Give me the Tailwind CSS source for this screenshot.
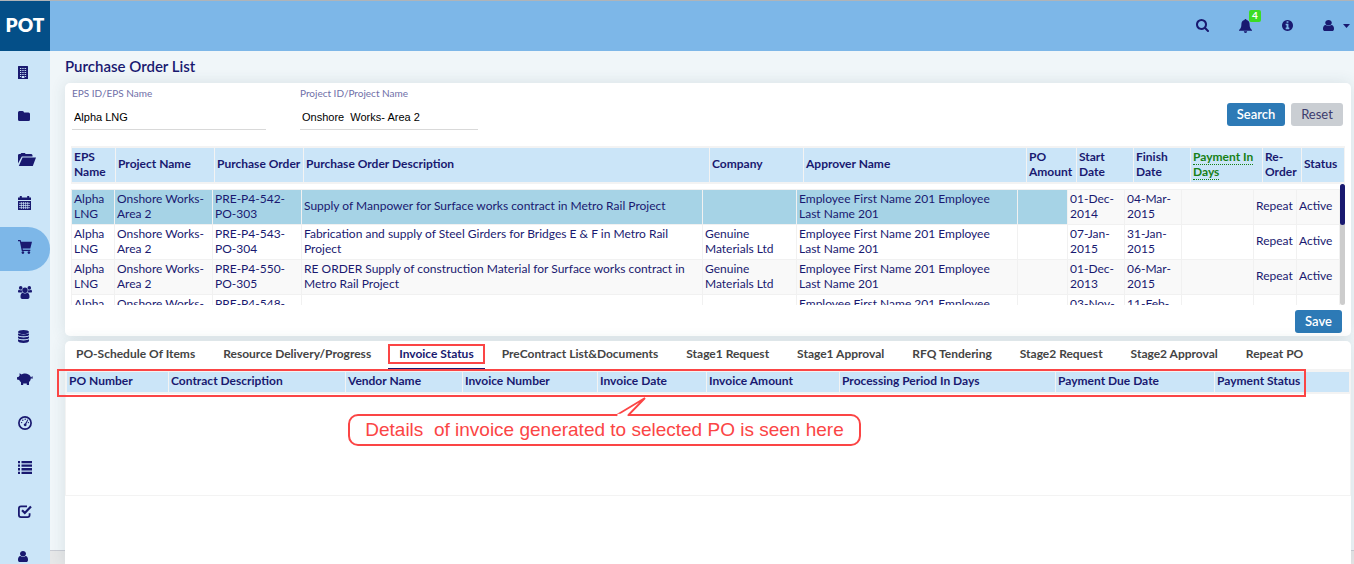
<!DOCTYPE html>
<html lang="en">
<head>
<meta charset="utf-8">
<title>Purchase Order List</title>
<script src="https://cdn.jsdelivr.net/npm/@tailwindcss/browser@4"></script>
</head>
<body class="flex h-screen flex-col overflow-hidden border-t border-[#b0b4b8] bg-[#f0f6f9] font-['Lato',sans-serif] text-xs text-[#191970]">

<header class="flex h-[50px] shrink-0 items-center bg-[#7db7e8]">
  <a href="#" class="flex h-full w-[50px] items-center justify-center bg-[#044f88] pb-[2px] text-[19px] font-extrabold text-white">POT</a>
  <div class="ml-auto flex items-center pr-1 pb-px">
    <button aria-label="Search" class="mr-[30px] block"><svg class="size-[13px]" viewBox="64 128 1664 1664" fill="currentColor"><path d="M1216 832q0-185-131.500-316.500t-316.500-131.500-316.500 131.500-131.500 316.500 131.500 316.500 316.500 131.500 316.500-131.500 131.500-316.500zm512 832q0 52-38 90t-90 38q-54 0-90-38l-343-342q-179 124-399 124-143 0-273.500-55.500t-225-150-150-225-55.500-273.500 55.500-273.500 150-225 225-150 273.500-55.500 273.500 55.500 225 150 150 225 55.500 273.500q0 220-124 399l343 343q37 37 37 90z"/></svg></button>
    <button aria-label="Notifications" class="relative mr-[30px] block"><svg class="h-[14px] w-[13px]" viewBox="0 0 13 14" fill="currentColor"><path d="M6.500 0a1 1 0 0 1 1 1.100C9.700 1.600 10.600 3.400 10.600 5.300c0 3 .8 4.500 2.400 5.700v.8H0V11c1.600-1.200 2.400-2.700 2.400-5.700 0-1.900.9-3.700 3.100-4.200A1 1 0 0 1 6.500 0zM4.800 12.300h3.400a1.700 1.700 0 0 1-3.400 0z"/></svg><span class="absolute -top-[9px] left-[10px] flex h-3 w-3 items-center justify-center rounded-xs bg-[#3cdc23] text-[10px] font-bold text-white">4</span></button>
    <button aria-label="Information" class="mr-[30px] block"><svg class="size-[11px]" viewBox="128 128 1536 1536" fill="currentColor"><path d="M1152 1376v-160q0-14-9-23t-23-9h-96v-512q0-14-9-23t-23-9h-320q-14 0-23 9t-9 23v160q0 14 9 23t23 9h96v320h-96q-14 0-23 9t-9 23v160q0 14 9 23t23 9h448q14 0 23-9t9-23zm-128-896v-160q0-14-9-23t-23-9h-192q-14 0-23 9t-9 23v160q0 14 9 23t23 9h192q14 0 23-9t9-23zm640 416q0 209-103 385.500t-279.500 279.500-385.500 103-385.500-103-279.500-279.500-103-385.500 103-385.500 279.500-279.500 385.500-103 385.500 103 279.500 279.500 103 385.500z"/></svg></button>
    <button aria-label="Account" class="flex items-center gap-[9px]"><svg class="h-[11px] w-[11px]" viewBox="256 128 1280 1536" preserveAspectRatio="none" fill="currentColor"><path d="M1536 1399q0 109-62.500 187t-150.500 78h-854q-88 0-150.500-78t-62.500-187q0-85 8.500-160.500t31.500-152 58.500-131 94-89 134.500-34.500q131 128 313 128t313-128q76 0 134.500 34.500t94 89 58.500 131 31.500 152 8.500 160.500zm-256-887q0 159-112.500 271.500t-271.500 112.500-271.500-112.500-112.500-271.500 112.500-271.500 271.500-112.500 271.500 112.500 112.500 271.500z"/></svg><svg class="h-1 w-[7px]" viewBox="0 0 7 4" fill="currentColor"><path d="M0 0h7L3.500 4z"/></svg></button>
  </div>
</header>

<div class="flex min-h-0 flex-1">
  <nav aria-label="Main" class="w-[50px] shrink-0 overflow-hidden bg-[#cbe5f8]">
    <a href="#" aria-label="Companies" class="flex h-11 items-center pb-[2px] pl-[18px]"><svg class="h-[13px] w-[10px]" viewBox="0 0 10 13"><path fill="currentColor" d="M.5 0h9a.5.5 0 0 1 .5.500V13H0V.500A.5.500 0 0 1 .5 0z"/><path fill="#cbe5f8" d="M2 2h1v1H2zm1.700 0h1v1h-1zm1.700 0h1v1h-1zM7.100 2h1v1h-1zM2 4h1v1H2zm1.700 0h1v1h-1zm1.700 0h1v1h-1zm1.700 0h1v1h-1zM2 6h1v1H2zm1.700 0h1v1h-1zm1.700 0h1v1h-1zm1.700 0h1v1h-1zM2 8h1v1H2zm1.700 0h1v1h-1zm1.700 0h1v1h-1zm1.700 0h1v1h-1zM2 10h1v1H2zm5.100 0h1v1h-1zM3.700 10h2.700v2H3.700z"/></svg></a>
    <a href="#" aria-label="Folder" class="flex h-11 items-center pb-[2px] pl-[18px]"><svg class="h-[10px] w-3" viewBox="0 0 12 10" fill="currentColor"><path d="M1.500 0h3A1.500 1.500 0 0 1 6 1.500h4.500A1.500 1.500 0 0 1 12 3v5.500a1.500 1.500 0 0 1-1.500 1.500h-9A1.500 1.500 0 0 1 0 8.500v-7A1.500 1.500 0 0 1 1.500 0z"/></svg></a>
    <a href="#" aria-label="Open folder" class="flex h-11 items-center pb-1 pl-[18px]"><svg class="h-[13px] w-[18px]" viewBox="0 0 18 13" fill="currentColor"><path d="M0 10.500V1.800L1 1h1.500L3.300 0h3.500l.9 1H13.500l1 1v1.500H3.800z"/><path d="M4.500 4.400H18L14.800 13H.8z"/></svg></a>
    <a href="#" aria-label="Calendar" class="flex h-11 items-center pb-1 pl-[18px]"><svg class="h-[14px] w-[13px]" viewBox="0 0 13 14"><path fill="currentColor" d="M0 1.500h1.800V0h2v1.500h5.400V0h2v1.500H13V4H0zM0 5h13v8.500a.5.5 0 0 1-.5.500H.5a.5.5 0 0 1-.5-.5z"/><path stroke="#cbe5f8" stroke-width=".7" d="M1 7.300h11M1 9.500h11M1 11.700h11M3.400 6v7M5.500 6v7M7.600 6v7M9.700 6v7"/></svg></a>
    <a href="#" aria-label="Purchase orders" aria-current="page" class="flex h-11 items-center rounded-r-full bg-[#7db7e8] pb-1 pl-[18px]"><svg class="size-[14px]" viewBox="0 0 14 14" fill="currentColor"><path d="M0 0h2.600l.6 1.800H14L12.300 8.500H4.600l.3 1.300h7.400v1.200H3.800L1.800 1.300H0z"/><circle cx="4.900" cy="12.600" r="1.300"/><circle cx="10.900" cy="12.600" r="1.300"/></svg></a>
    <a href="#" aria-label="Teams" class="flex h-11 items-center pb-[2px] pl-[18px]"><svg class="h-[13px] w-[14px]" viewBox="0 0 14 13" fill="currentColor"><circle cx="2.700" cy="1.900" r="1.800"/><circle cx="11.300" cy="1.900" r="1.800"/><circle cx="7" cy="4.300" r="2.700"/><path d="M0 5.500C0 4.300.5 3.700 1.200 3.700c.8.600 1.700.6 2.500.3 0 1 .3 1.900.9 2.600H1C.3 6.600 0 6.200 0 5.500zM14 5.500c0-1.200-.5-1.800-1.200-1.800-.8.600-1.700.6-2.500.3 0 1-.3 1.900-.9 2.600H13c.7 0 1-.4 1-1.100zM2.500 11c0-2.500.6-4 2.200-4.200 1.400 1 3.200 1 4.600 0 1.600.2 2.200 1.700 2.200 4.200 0 1.300-.7 2-1.800 2H4.300c-1.100 0-1.800-.7-1.800-2z"/></svg></a>
    <a href="#" aria-label="Data" class="flex h-11 items-center pb-[2px] pl-[18px]"><svg class="h-[13px] w-[11px]" viewBox="0 0 11 13" fill="currentColor"><ellipse cx="5.500" cy="2" rx="5.500" ry="2"/><path d="M0 3.300c1.600 1.500 9.400 1.500 11 0v1.400c0 2.200-11 2.200-11 0zM0 6.300c1.600 1.500 9.400 1.500 11 0v1.400c0 2.200-11 2.200-11 0zM0 9.300c1.600 1.500 9.400 1.500 11 0V11c0 2.600-11 2.600-11 0z"/></svg></a>
    <a href="#" aria-label="Budget" class="flex h-11 items-center pb-1 pl-[17px]"><svg class="h-3 w-4" viewBox="0 0 16 12" fill="currentColor"><path d="M2.500.3 4.800 1.500C6 .3 9.500.2 11.500 1.400c1.300.7 2 1.700 2.300 2.900h.8l.3-1h.7l-.2 1.100.6.300-.2.800h-2c-.1 1.500-.7 2.600-1.800 3.500V12H9.800v-1.600H6.200V12H4V9.300C3.200 8.700 2.600 8 2.200 7.100L0 6.500V4.300l1.800-.5.8-1.300z"/></svg></a>
    <a href="#" aria-label="Dashboard" class="flex h-11 items-center pb-1 pl-[18px]"><svg class="size-[14px]" viewBox="0 0 14 14" fill="currentColor"><circle cx="7" cy="7" r="6.100" fill="none" stroke="currentColor" stroke-width="1.700"/><circle cx="3.600" cy="6.600" r=".7"/><circle cx="4.800" cy="4.200" r=".7"/><circle cx="7.200" cy="3.200" r=".7"/><circle cx="10.400" cy="6.600" r=".7"/><path d="m9.700 3.300.6.400-2 4.300a1.400 1.400 0 1 1-1.200-.6z"/></svg></a>
    <a href="#" aria-label="Lists" class="flex h-11 items-center pb-1 pl-[18px]"><svg class="h-[13px] w-[14px]" viewBox="0 0 14 13" fill="currentColor"><path d="M0 0h2v2.300H0zM3.500 0H14v2.300H3.500zM0 3.500h2v2.300H0zM3.500 3.500H14v2.300H3.500zM0 7.100h2v2.300H0zM3.500 7.100H14v2.300H3.500zM0 10.700h2V13H0zM3.500 10.700H14V13H3.500z"/></svg></a>
    <a href="#" aria-label="Approvals" class="flex h-11 items-center pb-1 pl-[18px]"><svg class="h-[13px] w-[14px]" viewBox="0 0 14 13" fill="none" stroke="currentColor"><path stroke-width="1.800" d="M9 1.300H3A2.100 2.100 0 0 0 .9 3.400V10A2.100 2.100 0 0 0 3 12.100h6.500A2.100 2.100 0 0 0 11.600 10V8.200"/><path stroke-width="2.200" d="m4 5.200 2.800 2.700L13 1.500"/></svg></a>
    <a href="#" aria-label="Users" class="flex h-11 items-center pb-[2px] pl-[18px]"><svg class="h-[11px] w-[10px]" viewBox="256 128 1280 1536" preserveAspectRatio="none" fill="currentColor"><path d="M1536 1399q0 109-62.500 187t-150.500 78h-854q-88 0-150.500-78t-62.500-187q0-85 8.500-160.500t31.500-152 58.500-131 94-89 134.500-34.500q131 128 313 128t313-128q76 0 134.500 34.500t94 89 58.500 131 31.500 152 8.500 160.500zm-256-887q0 159-112.500 271.500t-271.500 112.500-271.500-112.500-112.500-271.500 112.500-271.500 271.500-112.500 271.500 112.500 112.500 271.500z"/></svg></a>
  </nav>

  <main class="relative flex min-w-0 flex-1 flex-col pl-[15px] pr-[3px]">
    <footer class="absolute inset-x-0 bottom-0 h-[14px] border-t border-[#c9ccd4] bg-[#e6e7e8]"></footer>
    <h1 class="flex h-8 items-center text-[15px] font-semibold">Purchase Order List</h1>

    <section class="relative mb-[5px] rounded-[5px] bg-white px-[6px] pb-[3px] shadow-[0_0_15px_rgba(40,70,80,0.12)]">
      <form class="flex h-[63px] items-start pt-1">
        <div class="ml-px mr-[34px] w-[194px]">
          <label for="eps" class="block text-[10px] leading-3 text-[#6f6fa8]">EPS ID/EPS Name</label>
          <input id="eps" value="Alpha LNG" class="block h-[31px] w-full border-b border-[#d9d9d9] pt-[6px] pl-[2px] font-['Liberation_Sans',sans-serif] text-[11px] text-black">
        </div>
        <div class="w-[178px]">
          <label for="project" class="block text-[10px] leading-3 text-[#6f6fa8]">Project ID/Project Name</label>
          <input id="project" value="Onshore  Works- Area 2" class="block h-[31px] w-full border-b border-[#d9d9d9] pt-[6px] pl-[2px] font-['Liberation_Sans',sans-serif] text-[11px] text-black">
        </div>
        <div class="mt-4 mr-[2px] ml-auto flex gap-[6px]">
          <button type="button" class="h-[23px] w-[58px] rounded-[3px] bg-[#2d7ab6] text-[13px] font-semibold text-white">Search</button>
          <button type="button" class="h-[23px] w-[52px] rounded-[3px] bg-[#caced3] text-[13px] text-[#3c3c6e]">Reset</button>
        </div>
      </form>

      <table class="w-full table-fixed border-collapse border-y-2 border-[#f3f3f3] bg-[#cbe5f8] text-left font-semibold leading-[15px]">
        <colgroup><col class="w-[44px]"><col class="w-[99px]"><col class="w-[89px]"><col><col class="w-[94px]"><col class="w-[223px]"><col class="w-[50px]"><col class="w-[57px]"><col class="w-[57px]"><col class="w-[72px]"><col class="w-[39px]"><col class="w-[43px]"></colgroup>
        <thead>
          <tr class="h-9 *:border-x *:border-[#f3f3f3] *:pb-[3px] *:pl-[2px]">
            <th>EPS Name</th><th>Project Name</th><th>Purchase Order</th><th>Purchase Order Description</th><th>Company</th><th>Approver Name</th><th>PO Amount</th><th>Start Date</th><th>Finish Date</th><th><span class="border-b border-dotted border-[#168016] text-[#168016]">Payment In</span> <span class="border-b border-dotted border-[#168016] text-[#168016]">Days</span></th><th>Re-Order</th><th>Status</th>
          </tr>
        </thead>
      </table>

      <div class="flex h-[121px] items-start overflow-hidden">
        <table aria-label="Purchase orders" class="mt-[5px] min-w-0 flex-1 table-fixed border-collapse leading-[15px]">
          <colgroup><col class="w-[43px]"><col class="w-[98px]"><col class="w-[89px]"><col><col class="w-[94px]"><col class="w-[221px]"><col class="w-[50px]"><col class="w-[57px]"><col class="w-[57px]"><col class="w-[72px]"><col class="w-[43px]"><col class="w-[43px]"></colgroup>
          <tbody>
            <tr class="h-[35px] bg-[#f9f9f9] *:border *:border-[#f1f1f1] *:pb-[3px] *:pl-[2px]"><td class="bg-[#a6d3e6]">Alpha LNG</td><td class="bg-[#a6d3e6]">Onshore Works-Area 2</td><td class="bg-[#a6d3e6]">PRE-P4-542-PO-303</td><td class="bg-[#a6d3e6]">Supply of Manpower for Surface works contract in Metro Rail Project</td><td class="bg-[#a6d3e6]"></td><td class="bg-[#a6d3e6]">Employee First Name 201 Employee Last&nbsp;Name&nbsp;201</td><td class="bg-[#a6d3e6]"></td><td>01-Dec-2014</td><td>04-Mar-2015</td><td></td><td>Repeat</td><td>Active</td></tr>
            <tr class="h-[35px] *:border *:border-[#f1f1f1] *:pb-[3px] *:pl-[2px]"><td>Alpha LNG</td><td>Onshore Works-Area 2</td><td>PRE-P4-543-PO-304</td><td>Fabrication and supply of Steel Girders for Bridges E &amp; F in Metro Rail Project</td><td>Genuine Materials Ltd</td><td>Employee First Name 201 Employee Last&nbsp;Name&nbsp;201</td><td></td><td>07-Jan-2015</td><td>31-Jan-2015</td><td></td><td>Repeat</td><td>Active</td></tr>
            <tr class="h-[35px] bg-[#f9f9f9] *:border *:border-[#f1f1f1] *:pb-[3px] *:pl-[2px]"><td>Alpha LNG</td><td>Onshore Works-Area 2</td><td>PRE-P4-550-PO-305</td><td>RE ORDER Supply of construction Material for Surface works contract in Metro Rail Project</td><td>Genuine Materials Ltd</td><td>Employee First Name 201 Employee Last&nbsp;Name&nbsp;201</td><td></td><td>01-Dec-2013</td><td>06-Mar-2015</td><td></td><td>Repeat</td><td>Active</td></tr>
            <tr class="h-[35px] *:border *:border-[#f1f1f1] *:pb-[3px] *:pl-[2px]"><td>Alpha LNG</td><td>Onshore Works-Area 2</td><td>PRE-P4-548-PO-306</td><td></td><td></td><td>Employee First Name 201 Employee Last&nbsp;Name&nbsp;201</td><td></td><td>03-Nov-2013</td><td>11-Feb-2015</td><td></td><td>Repeat</td><td>Active</td></tr>
          </tbody>
        </table>
        <div class="h-full w-[5px] rounded-full bg-[#cccccc]"><div class="h-[41px] rounded-full bg-[#191970]"></div></div>
      </div>
      <div class="mt-[5px] mr-[3px] flex justify-end">
        <button type="button" class="h-[23px] w-[47px] rounded-[3px] bg-[#2d7ab6] text-[13px] font-semibold text-white">Save</button>
      </div>
    </section>

    <section class="relative flex-1 rounded-t-[5px] bg-white shadow-[0_0_15px_rgba(40,70,80,0.12)]">
      <div role="tablist" class="flex h-7 gap-[6px] font-bold text-[#444] *:h-full *:px-[11px] *:pb-[2px]">
        <button role="tab">PO-Schedule Of Items</button>
        <button role="tab">Resource Delivery/Progress</button>
        <button role="tab" aria-selected="true" class="relative border-b border-[#191970] text-[#191970]">Invoice Status<span class="absolute inset-x-0 top-[3px] h-5 border-2 border-[#fb4545]"></span></button>
        <button role="tab">PreContract List&amp;Documents</button>
        <button role="tab">Stage1 Request</button>
        <button role="tab">Stage1 Approval</button>
        <button role="tab">RFQ Tendering</button>
        <button role="tab">Stage2 Request</button>
        <button role="tab">Stage2 Approval</button>
        <button role="tab">Repeat PO</button>
      </div>
      <div class="h-[127px] border border-[#f3f3f3]">
        <table class="w-full table-fixed border-collapse border-y-2 border-[#f3f3f3] bg-[#cbe5f8] text-left font-semibold leading-[15px]">
          <colgroup><col class="w-[102px]"><col><col class="w-[117px]"><col class="w-[135px]"><col class="w-[109px]"><col class="w-[133px]"><col class="w-[216px]"><col class="w-[159px]"><col class="w-[135px]"></colgroup>
          <thead><tr class="h-[22px] *:border-x *:border-[#f3f3f3] *:pb-[3px] *:pl-[2px]"><th>PO Number</th><th>Contract Description</th><th>Vendor Name</th><th>Invoice Number</th><th>Invoice Date</th><th>Invoice Amount</th><th>Processing Period In Days</th><th>Payment Due Date</th><th>Payment Status</th></tr></thead>
        </table>
      </div>

      <!-- Annotation frame and speech bubble -->
      <div class="pointer-events-none absolute top-7 right-[45px] -left-2 h-7 border-2 border-[#fb4545]"></div>
      <div class="absolute top-[73px] left-[283px] flex h-8 w-[513px] items-center justify-center rounded-[10px] border-2 border-[#fb4545] bg-white font-['Liberation_Sans',sans-serif] text-[19px] whitespace-pre text-[#fb4545]">Details  of invoice generated to selected PO is seen here<svg class="absolute -top-[19px] left-[262px] h-5 w-9" viewBox="0 0 36 20" fill="none"><path d="M4 18.500 33 1 16 18.500" fill="#fff" stroke="#fb4545" stroke-width="1.800"/><path d="M5.500 18h9.700" stroke="#fff" stroke-width="2.400"/></svg></div>
    </section>
  </main>
</div>
</body>
</html>
